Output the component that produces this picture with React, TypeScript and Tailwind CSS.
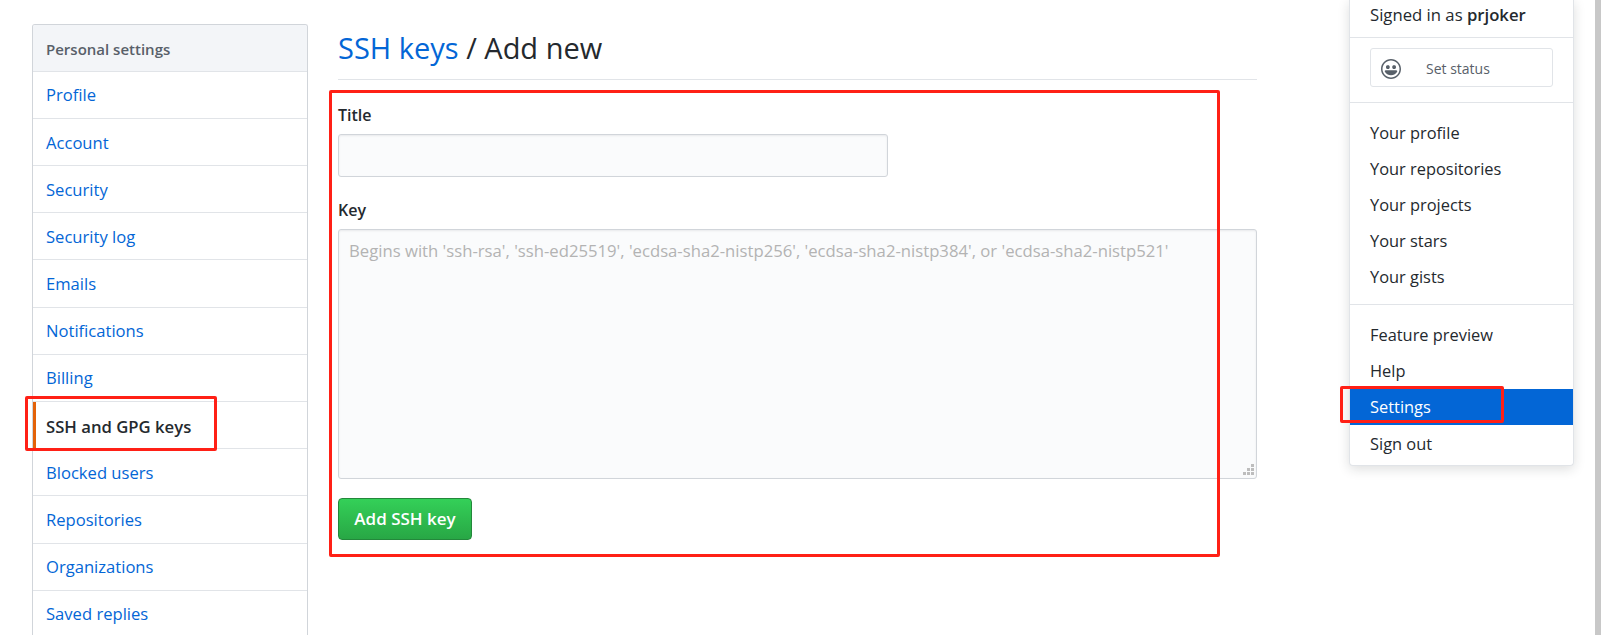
import React from 'react';

const navItems = ['Profile', 'Account', 'Security', 'Security log', 'Emails', 'Notifications', 'Billing', 'SSH and GPG keys', 'Blocked users', 'Repositories', 'Organizations', 'Saved replies'];

const SmileyIcon: React.FC = () => (
  <svg viewBox="0 0 16 16" className="w-5 h-5 mt-[2px]" fill="#586069">
    <path
      fillRule="evenodd"
      d="M8 0C3.58 0 0 3.58 0 8s3.58 8 8 8 8-3.58 8-8-3.58-8-8-8zm4.81 12.81a6.72 6.72 0 0 1-2.17 1.45c-.83.36-1.72.53-2.64.53-.92 0-1.81-.17-2.64-.53-.81-.34-1.55-.83-2.17-1.45a6.773 6.773 0 0 1-1.45-2.17A6.59 6.59 0 0 1 1.21 8c0-.92.17-1.81.53-2.64.34-.81.83-1.55 1.45-2.17.62-.62 1.36-1.11 2.17-1.45A6.59 6.59 0 0 1 8 1.21c.92 0 1.81.17 2.64.53.81.34 1.55.83 2.17 1.45.62.62 1.11 1.36 1.45 2.17.36.83.53 1.72.53 2.64 0 .92-.17 1.81-.53 2.64-.34.81-.83 1.55-1.45 2.17zM4 6.8v-.59c0-.66.53-1.19 1.2-1.19h.59c.66 0 1.19.53 1.19 1.19v.59c0 .67-.53 1.2-1.19 1.2H5.2C4.53 8 4 7.47 4 6.8zm5 0v-.59c0-.66.53-1.19 1.2-1.19h.59c.66 0 1.19.53 1.19 1.19v.59c0 .67-.53 1.2-1.19 1.2h-.59C9.53 8 9 7.47 9 6.8zm4 3.2c-.72 1.88-2.91 3-5 3s-4.28-1.13-5-3c-.14-.39.23-1 .66-1h8.59c.41 0 .89.61.75 1z"
    />
  </svg>
);

const ResizeGrip: React.FC = () => (
  <svg viewBox="0 0 12 12" className="absolute right-[2px] bottom-[3px] w-3 h-3" fill="#bdbdbd">
    <rect x="8" y="0" width="3" height="3" />
    <rect x="4" y="4" width="3" height="3" />
    <rect x="8" y="4" width="3" height="3" />
    <rect x="0" y="8" width="3" height="3" />
    <rect x="4" y="8" width="3" height="3" />
    <rect x="8" y="8" width="3" height="3" />
  </svg>
);

const Sidebar: React.FC = () => (
  <nav className="w-[276px] shrink-0 h-[640px] border border-b-0 border-[#d1d5da] rounded-t-[3px] overflow-hidden">
    <div className="h-[46.7px] pl-[13px] pt-[2px] flex items-center bg-[#f3f5f8] border-b border-[#e1e4e8] text-[15px] font-semibold text-[#586069]">
      Personal settings
    </div>
    {navItems.map((item) => {
      const active = item === 'SSH and GPG keys';
      return (
        <a
          key={item}
          className={
            active
              ? 'h-[47.2px] pl-[10px] pt-[2px] flex items-center border-l-[3px] border-l-[#e36209] border-b border-b-[#e1e4e8] text-[16.7px] font-semibold text-[#24292e]'
              : 'h-[47.2px] pl-[13px] pt-[2px] flex items-center border-b border-[#e1e4e8] text-[16.6px] text-[#0366d6]'
          }
        >
          {item}
        </a>
      );
    })}
  </nav>
);

const UserMenu: React.FC = () => (
  <div className="absolute left-[1349px] top-0 w-[225px] h-[466px] bg-white border border-t-0 border-[#e1e4e8] rounded-b-[4px] shadow-[0_3px_12px_rgba(27,31,35,0.15)] text-[16.4px] text-[#24292e]">
    <div className="h-[38px] pl-[20px] pb-[7px] flex items-center border-b border-[#e1e4e8]">
      <span className="text-[16.7px]">
        Signed in as <span className="font-semibold">prjoker</span>
      </span>
    </div>
    <div className="h-[65px] px-[20px] pt-[10px] border-b border-[#e1e4e8]">
      <div className="h-[39px] border border-[#e1e4e8] rounded-[3px] flex items-center pl-[10px]">
        <SmileyIcon />
        <span className="ml-[25px] mt-[2px] text-[14px] text-[#586069]">Set status</span>
      </div>
    </div>
    <div className="pt-[12px] pb-[9px] border-b border-[#e1e4e8]">
      {['Your profile', 'Your repositories', 'Your projects', 'Your stars', 'Your gists'].map((item) => (
        <div key={item} className="h-[36px] pl-[20px] flex items-center">
          {item}
        </div>
      ))}
    </div>
    <div className="pt-[12px]">
      {['Feature preview', 'Help', 'Settings', 'Sign out'].map((item) => (
        <div
          key={item}
          className={
            item === 'Settings'
              ? 'h-[36px] pl-[20px] flex items-center bg-[#0366d6] text-white'
              : item === 'Sign out'
                ? 'h-[36px] pl-[20px] pt-[2px] flex items-center'
                : 'h-[36px] pl-[20px] flex items-center'
          }
        >
          {item}
        </div>
      ))}
    </div>
  </div>
);

export default function App() {
  return (
    <div className="relative flex h-[635px] overflow-hidden bg-white font-['Open_Sans','Noto_Sans',sans-serif] text-[16px] text-[#24292e]">
      <div className="flex-1 flex pl-[32px] pt-[24px]">
        <Sidebar />
        <main className="ml-[30px] w-[919px] shrink-0">
          <div className="h-[56px] border-b border-[#e1e4e8] flex items-start">
            <h2 className="text-[29px] leading-[48px] text-[#24292e]">
              <span className="text-[#0366d6]">SSH keys</span> / Add new
            </h2>
          </div>
          <div className="mt-[24px] font-semibold leading-[22px]">Title</div>
          <input className="mt-[8px] block w-[550px] h-[43px] bg-[#fafbfc] border border-[#d1d5da] rounded-[3px] shadow-[inset_0_1px_2px_rgba(27,31,35,0.075)]" />
          <div className="mt-[22px] font-semibold leading-[22px]">Key</div>
          <div className="relative mt-[8px] h-[250px]">
            <textarea
              className="block w-full h-full resize-none bg-[#fafbfc] border border-[#d1d5da] rounded-[3px] px-[10px] pt-[8px] pb-[9px] text-[16.7px] placeholder:text-[#b3b3b3] shadow-[inset_0_1px_2px_rgba(27,31,35,0.075)]"
              placeholder="Begins with 'ssh-rsa', 'ssh-ed25519', 'ecdsa-sha2-nistp256', 'ecdsa-sha2-nistp384', or 'ecdsa-sha2-nistp521'"
            />
            <ResizeGrip />
          </div>
          <button className="mt-[19px] block w-[134px] h-[42px] rounded-[4px] border border-[#23883b] bg-gradient-to-b from-[#34d058] to-[#28a745] text-[17px] text-white font-semibold">
            Add SSH key
          </button>
        </main>
      </div>
      <div className="w-[6px] shrink-0 bg-[#c8c8c8]" />
      <UserMenu />
      {/* red annotation boxes */}
      <div className="absolute left-[329px] top-[90px] w-[891px] h-[467px] border-[3px] border-[#ff2016] rounded-[2px]" />
      <div className="absolute left-[25px] top-[396px] w-[192px] h-[55px] border-[3px] border-[#ff2016] rounded-[2px]" />
      <div className="absolute left-[1340px] top-[386px] w-[164px] h-[37px] border-[3px] border-[#ff2016] rounded-[2px]" />
    </div>
  );
}
